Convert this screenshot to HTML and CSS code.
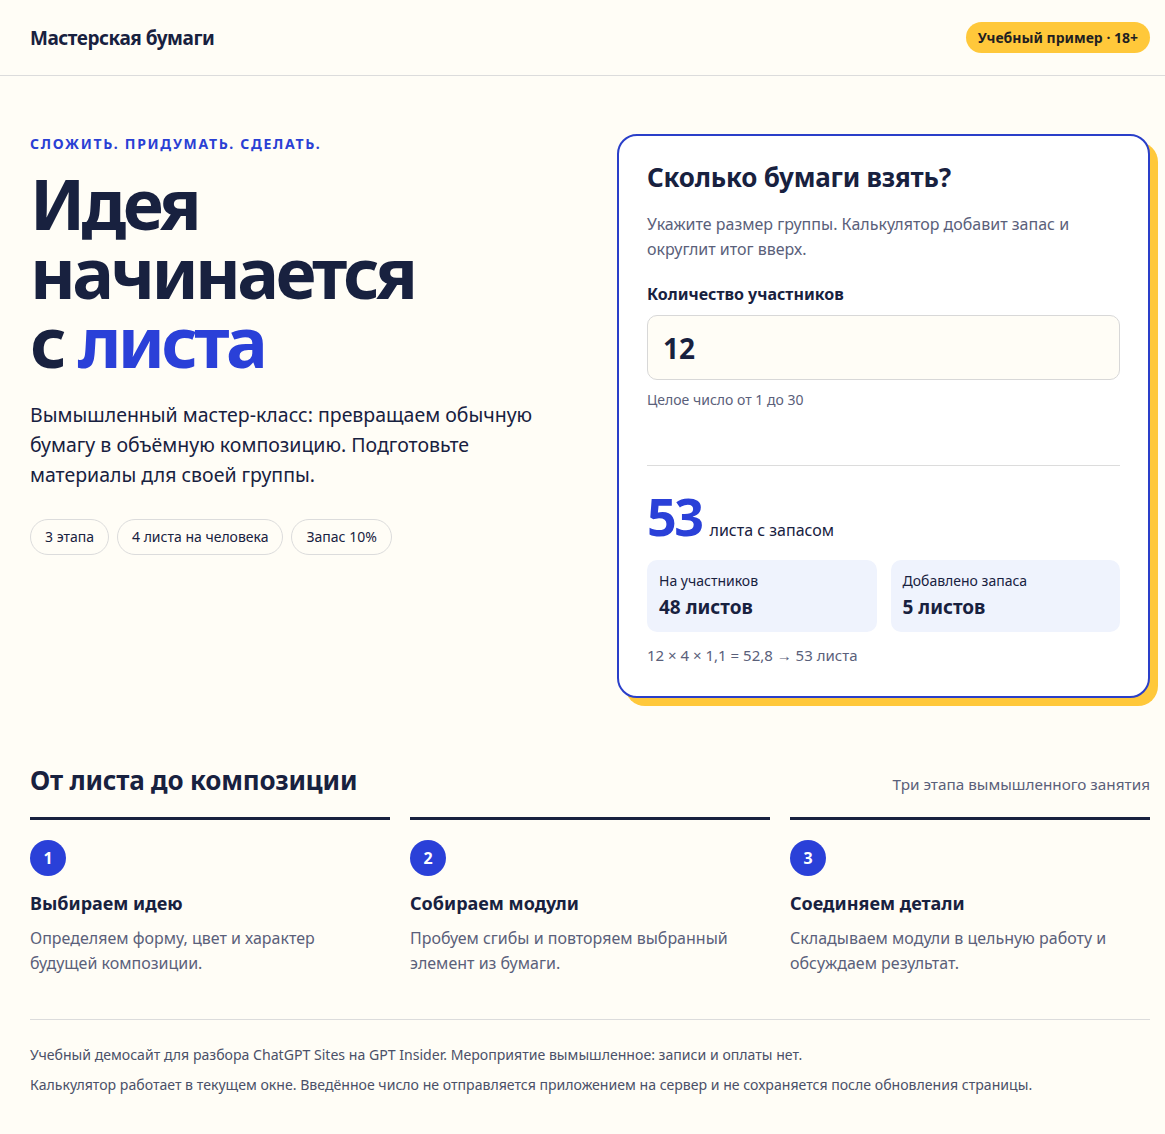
FILE: index.html
```html
<!DOCTYPE html>
<html lang="ru">
<head>
  <meta charset="UTF-8">
  <title>Мастерская бумаги</title>
  <link rel="stylesheet" href="styles.css">
</head>
<body>

<header class="topbar">
  <div class="wrap topbar-inner">
    <div class="brand">Мастерская бумаги</div>
    <span class="badge">Учебный пример · 18+</span>
  </div>
</header>

<main class="wrap">
  <section class="hero">
    <div class="hero-text">
      <p class="eyebrow">Сложить. Придумать. Сделать.</p>
      <h1>Идея<br>начинается<br>с <span class="accent">листа</span></h1>
      <p class="lead">Вымышленный мастер-класс: превращаем обычную бумагу в объёмную композицию. Подготовьте материалы для своей группы.</p>
      <div class="chips">
        <span class="chip">3 этапа</span>
        <span class="chip">4 листа на человека</span>
        <span class="chip">Запас 10%</span>
      </div>
    </div>

    <div class="calc">
      <h2>Сколько бумаги взять?</h2>
      <p class="calc-desc">Укажите размер группы. Калькулятор добавит запас и округлит итог вверх.</p>
      <label for="people">Количество участников</label>
      <input type="text" id="people" value="12" oninput="calculate()">
      <p class="hint">Целое число от 1 до 30</p>

      <div class="result">
        <div class="total"><span id="total" class="total-num">53</span><span id="totalText">листа с запасом</span></div>
        <div class="stats">
          <div class="stat">
            <span class="stat-label">На участников</span>
            <span id="base" class="stat-value">48 листов</span>
          </div>
          <div class="stat">
            <span class="stat-label">Добавлено запаса</span>
            <span id="extra" class="stat-value">5 листов</span>
          </div>
        </div>
        <p id="formula" class="formula">12 × 4 × 1,1 = 52,8 → 53 листа</p>
      </div>
    </div>
  </section>

  <section class="steps-block">
    <div class="steps-head">
      <h2>От листа до композиции</h2>
      <span class="steps-note">Три этапа вымышленного занятия</span>
    </div>
    <div class="steps">
      <div class="step">
        <span class="step-num">1</span>
        <h3>Выбираем идею</h3>
        <p>Определяем форму, цвет и характер будущей композиции.</p>
      </div>
      <div class="step">
        <span class="step-num">2</span>
        <h3>Собираем модули</h3>
        <p>Пробуем сгибы и повторяем выбранный элемент из бумаги.</p>
      </div>
      <div class="step">
        <span class="step-num">3</span>
        <h3>Соединяем детали</h3>
        <p>Складываем модули в цельную работу и обсуждаем результат.</p>
      </div>
    </div>
  </section>

  <footer class="footer">
    <p>Учебный демосайт для разбора ChatGPT Sites на GPT Insider. Мероприятие вымышленное: записи и оплаты нет.</p>
    <p>Калькулятор работает в текущем окне. Введённое число не отправляется приложением на сервер и не сохраняется после обновления страницы.</p>
  </footer>
</main>

<script>
function plural(n, one, few, many) {
  const m10 = n % 10, m100 = n % 100;
  if (m10 === 1 && m100 !== 11) return one;
  if (m10 >= 2 && m10 <= 4 && (m100 < 12 || m100 > 14)) return few;
  return many;
}

function sheets(n) {
  return plural(n, 'лист', 'листа', 'листов');
}

function calculate() {
  const n = parseInt(document.getElementById('people').value, 10);
  if (!n || n < 1 || n > 30) return;

  const base = n * 4;
  const raw = base * 1.1;
  const total = Math.ceil(raw - 1e-9);
  const extra = total - base;

  document.getElementById('total').textContent = total;
  document.getElementById('totalText').textContent = sheets(total) + ' с запасом';
  document.getElementById('base').textContent = base + ' ' + sheets(base);
  document.getElementById('extra').textContent = extra + ' ' + sheets(extra);
  const rawText = (Math.round(raw * 10) / 10).toString().replace('.', ',');
  document.getElementById('formula').textContent =
    `${n} × 4 × 1,1 = ${rawText} → ${total} ${sheets(total)}`;
}

window.onload = calculate;
</script>

</body>
</html>
```

FILE: styles.css
```css
* { box-sizing: border-box; }
body { margin: 0; background: #fffdf6; color: #18213f; font-family: "Noto Sans", "Open Sans", sans-serif; }
p, h1, h2, h3 { margin: 0; }
.wrap { width: 1120px; margin-left: 30px; }

.topbar { border-bottom: 1px solid #dcdcdc; }
.topbar-inner { height: 75px; display: flex; align-items: center; justify-content: space-between; }
.brand { font-size: 19px; font-weight: 700; letter-spacing: -0.45px; }
.badge { background: #ffc83a; color: #1f1f22; font-size: 14px; font-weight: 700; padding: 6px 12px; border-radius: 999px; }

.hero { display: grid; grid-template-columns: 1fr 533px; gap: 54px; padding-top: 58px; }
.eyebrow { color: #2a40d4; font-size: 14px; font-weight: 700; letter-spacing: 1.7px; text-transform: uppercase; }
h1 { font-size: 70px; line-height: 69px; font-weight: 700; letter-spacing: -3.6px; margin-top: 16px; }
.accent { color: #2a40d8; }
.lead { font-size: 19.5px; line-height: 30px; margin-top: 24px; max-width: 520px; }
.chips { display: flex; gap: 8px; margin-top: 29px; }
.chip { border: 1px solid #dcdcdc; border-radius: 999px; padding: 8px 14px; font-size: 14px; line-height: 18px; }

.calc { background: #fff; border: 2px solid #2a3fc9; border-radius: 20px; box-shadow: 8px 8px 0 #ffc83a; padding: 24px 28px 31px; }
.calc h2 { font-size: 26px; font-weight: 700; line-height: 34px; letter-spacing: -0.2px; }
.calc-desc { color: #5a607a; font-size: 16px; line-height: 25px; margin-top: 18px; }
.calc label { display: block; font-size: 16px; font-weight: 700; margin-top: 21px; }
.calc input { width: 100%; height: 65px; margin-top: 10px; border: 1px solid #d8d8d8; border-radius: 10px; background: #fffdf6; padding: 0 15px; font-family: inherit; font-size: 28px; font-weight: 700; color: #18213f; outline: none; }
.hint { color: #5a607a; font-size: 14px; margin-top: 10px; }

.result { border-top: 1px solid #dcdcdc; margin-top: 56px; padding-top: 21px; }
.total { font-size: 16px; display: flex; align-items: baseline; gap: 8px; }
.total-num { color: #2a40d8; font-size: 52px; font-weight: 700; letter-spacing: -2.5px; line-height: 58px; }
.stats { display: grid; grid-template-columns: 1fr 1fr; gap: 14px; margin-top: 15px; }
.stat { background: #eff3fd; border-radius: 10px; padding: 11px 12px 11px; display: flex; flex-direction: column; }
.stat-label { font-size: 14px; line-height: 20px; }
.stat-value { font-size: 19px; font-weight: 700; line-height: 28px; margin-top: 2px; }
.formula { color: #5a607a; font-size: 15px; margin-top: 13px; }

.steps-block { padding-top: 64px; }
.steps-head { display: flex; justify-content: space-between; align-items: baseline; }
.steps-head h2 { font-size: 26px; font-weight: 700; letter-spacing: -0.2px; }
.steps-note { color: #5a607a; font-size: 15.3px; }
.steps { display: grid; grid-template-columns: repeat(3, 1fr); gap: 20px; margin-top: 19px; }
.step { border-top: 3px solid #18213f; padding-top: 20px; }
.step-num { display: flex; width: 36px; height: 36px; border-radius: 50%; background: #2a40d8; color: #fff; font-size: 16px; font-weight: 700; align-items: center; justify-content: center; }
.step h3 { font-size: 18px; font-weight: 700; margin-top: 15px; }
.step p { color: #5a607a; font-size: 16px; line-height: 25px; margin-top: 11px; max-width: 330px; }

.footer { border-top: 1px solid #dcdcdc; margin-top: 43px; padding: 25px 0 30px; color: #4a5068; font-size: 14.1px; }
.footer p { line-height: 20px; }
.footer p + p { margin-top: 10px; }
```
